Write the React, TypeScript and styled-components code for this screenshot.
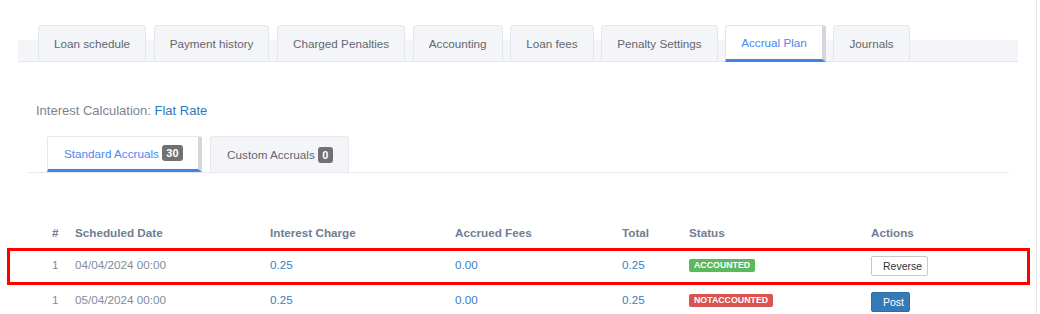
import styled, { createGlobalStyle } from "styled-components";

type Accrual = {
  id: number;
  date: string;
  interest: string;
  fees: string;
  total: string;
  accounted: boolean;
};

const topTabs = [
  "Loan schedule",
  "Payment history",
  "Charged Penalties",
  "Accounting",
  "Loan fees",
  "Penalty Settings",
  "Accrual Plan",
  "Journals",
];

const accruals: Accrual[] = [
  { id: 1, date: "04/04/2024 00:00", interest: "0.25", fees: "0.00", total: "0.25", accounted: true },
  { id: 1, date: "05/04/2024 00:00", interest: "0.25", fees: "0.00", total: "0.25", accounted: false },
];

const App = () => {
  return (
    <>
      <GlobalStyle />
      <Page>
        <TopNav>
          {topTabs.map((tab) => (
            <TopTab key={tab} $active={tab === "Accrual Plan"}>
              {tab}
            </TopTab>
          ))}
        </TopNav>

        <InfoLine>
          Interest Calculation: <InfoValue>Flat Rate</InfoValue>
        </InfoLine>

        <SubNav>
          <SubTab $active>
            Standard Accruals <Count>30</Count>
          </SubTab>
          <SubTab>
            Custom Accruals <Count>0</Count>
          </SubTab>
        </SubNav>

        <Table>
          <HeadRow>
            <span>#</span>
            <span>Scheduled Date</span>
            <span>Interest Charge</span>
            <span>Accrued Fees</span>
            <span>Total</span>
            <span>Status</span>
            <span>Actions</span>
          </HeadRow>
          {accruals.map((row, index) => (
            <Row key={row.date} $highlight={index === 0}>
              <Muted>{row.id}</Muted>
              <Muted>{row.date}</Muted>
              <Amount>{row.interest}</Amount>
              <Amount>{row.fees}</Amount>
              <Amount>{row.total}</Amount>
              <span>
                <Status $ok={row.accounted}>{row.accounted ? "ACCOUNTED" : "NOTACCOUNTED"}</Status>
              </span>
              <span>
                {row.accounted ? <ReverseButton>Reverse</ReverseButton> : <PostButton>Post</PostButton>}
              </span>
            </Row>
          ))}
        </Table>
      </Page>
    </>
  );
};

export default App;

const GlobalStyle = createGlobalStyle`
  html, body {
    margin: 0;
    padding: 0;
    background: #fff;
    font-family: "Liberation Sans", Arial, sans-serif;
  }
`;

const Page = styled.div`
  width: 1037px;
  height: 314px;
  overflow: hidden;
  border-right: 1px solid #e6e6e6;
  padding-top: 25px;
  box-sizing: border-box;
`;

const TopNav = styled.div`
  display: flex;
  gap: 7.6px;
  margin-left: 18px;
  width: 1000px;
  height: 37px;
  padding-left: 20px;
  box-sizing: border-box;
  background: linear-gradient(to bottom, transparent 15px, #f4f5f8 15px);
  box-shadow: inset 0 -1px 0 #e6e8ec;
`;

const TopTab = styled.div<{ $active?: boolean }>`
  display: flex;
  align-items: center;
  height: 37px;
  box-sizing: border-box;
  padding: 0 15px;
  font-size: 11.7px;
  color: ${({ $active }) => ($active ? "#4a89ee" : "#62676e")};
  background: ${({ $active }) => ($active ? "#fff" : "#f4f5f8")};
  border: 1px solid #e3e6ea;
  border-radius: 3px 3px 0 0;
  border-bottom: ${({ $active }) => ($active ? "3px solid #3d85ea" : "1px solid #e3e6ea")};
  border-right: ${({ $active }) => ($active ? "4px solid #d3d6da" : "1px solid #e3e6ea")};
  white-space: nowrap;
`;

const InfoLine = styled.div`
  margin: 40px 0 0 36px;
  font-size: 13px;
  line-height: 18px;
  color: #7a8595;
`;

const InfoValue = styled.span`
  color: #2e78bd;
`;

const SubNav = styled.div`
  display: flex;
  gap: 8px;
  margin: 16px 0 0 27px;
  width: 982px;
  padding-left: 20px;
  box-sizing: border-box;
  border-bottom: 1px solid #e6e8ec;
`;

const SubTab = styled.div<{ $active?: boolean }>`
  display: flex;
  align-items: center;
  gap: 3px;
  height: 36px;
  box-sizing: border-box;
  padding: 0 15px 0 16px;
  font-size: 11.7px;
  color: ${({ $active }) => ($active ? "#4a89ee" : "#62676e")};
  background: ${({ $active }) => ($active ? "#fff" : "#f4f5f8")};
  border: 1px solid #e6e8ec;
  border-bottom: ${({ $active }) => ($active ? "3px solid #3d85ea" : "none")};
  border-right: ${({ $active }) => ($active ? "4px solid #d3d6da" : "1px solid #e6e8ec")};
  border-radius: 3px 3px 0 0;
  margin-bottom: ${({ $active }) => ($active ? "-1px" : "0")};
  white-space: nowrap;
`;

const Count = styled.span`
  display: inline-block;
  height: 16px;
  line-height: 16px;
  padding: 0 4.5px;
  border-radius: 3px;
  background: #717171;
  color: #fff;
  font-size: 11px;
  font-weight: bold;
  text-align: center;
`;

const Table = styled.div`
  margin-top: 44px;
`;

const columns = "27px 195px 185px 167px 67px 182px 1fr";

const HeadRow = styled.div`
  display: grid;
  grid-template-columns: ${columns};
  align-items: center;
  height: 30px;
  padding-left: 48px;
  font-size: 11.7px;
  font-weight: bold;
  color: #6f7e92;

  & > span:first-child {
    padding-left: 4px;
  }
`;

const Row = styled.div<{ $highlight?: boolean }>`
  position: relative;
  display: grid;
  grid-template-columns: ${columns};
  align-items: center;
  height: 35px;
  padding-left: 48px;
  font-size: 11.7px;

  & > span:first-child {
    padding-left: 4px;
  }

  &::after {
    content: "";
    display: ${({ $highlight }) => ($highlight ? "block" : "none")};
    position: absolute;
    top: 1px;
    left: 7px;
    right: 6px;
    height: 37px;
    box-sizing: border-box;
    border: 3px solid #ff0000;
    pointer-events: none;
  }
`;

const Muted = styled.span`
  color: #808d9c;
`;

const Amount = styled.span`
  color: #3a80c4;
`;

const Status = styled.span<{ $ok: boolean }>`
  display: inline-block;
  height: 13px;
  line-height: 13px;
  padding: 0 5px;
  border-radius: 2px;
  margin-top: 2px;
  background: ${({ $ok }) => ($ok ? "#5cb85c" : "#d9534f")};
  color: #fff;
  font-size: 8.8px;
  font-weight: bold;
`;

const ActionButton = styled.button`
  height: 20px;
  padding: 0 5px 0 11px;
  margin-top: 2px;
  border-radius: 2px;
  font-family: "Liberation Sans", Arial, sans-serif;
  font-size: 10.5px;
  cursor: pointer;
`;

const ReverseButton = styled(ActionButton)`
  background: #fff;
  color: #333;
  border: 1px solid #c8c8c8;
`;

const PostButton = styled(ActionButton)`
  background: #337ab7;
  color: #fff;
  border: 1px solid #2e6da4;
  margin-top: 4px;
`;
